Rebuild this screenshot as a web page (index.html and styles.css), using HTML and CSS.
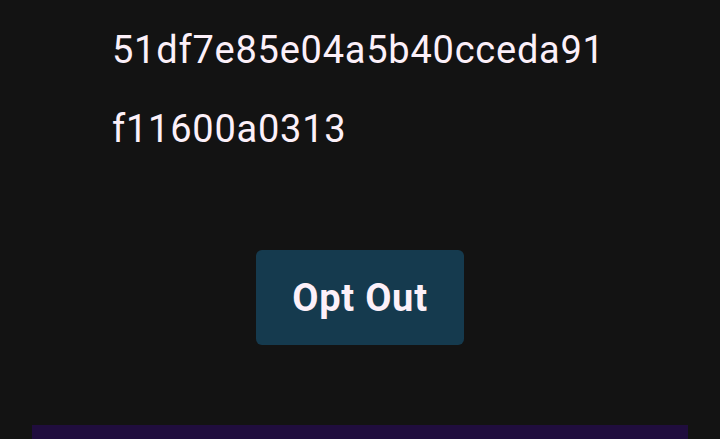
FILE: index.html
```html
<!DOCTYPE html>
<html lang="en">
<head>
  <meta charset="UTF-8">
  <meta name="viewport" content="width=device-width, initial-scale=1.0">
  <title>Opt Out</title>
  <link rel="stylesheet" href="styles.css">
</head>
<body>
<div class="page">
  <p class="device-id">51df7e85e04a5b40cceda91f11600a0313</p>
  <div class="actions">
    <button type="button" class="opt-out">Opt Out</button>
  </div>
  <div class="footer-bar"></div>
</div>
</body>
</html>
```

FILE: styles.css
```css
* {
  margin: 0;
  padding: 0;
  box-sizing: border-box;
}

body {
  font-family: 'Roboto', 'Noto Sans', sans-serif;
  background: #131313;
  color: #fcf0f9;
  overflow: hidden;
}

.page {
  padding: 11px 32px 0;
  display: flex;
  flex-direction: column;
}

.device-id {
  width: 498px;
  margin-left: 80px;
  font-size: 38px;
  line-height: 79px;
  letter-spacing: 0.02em;
  word-break: break-all;
}

.actions {
  display: flex;
  justify-content: center;
  margin-top: 81px;
}

.opt-out {
  width: 208px;
  height: 95px;
  background: #153a4e;
  color: #fcf0f9;
  border: none;
  border-radius: 6px;
  font-family: inherit;
  font-size: 38px;
  font-weight: 700;
  letter-spacing: 0.02em;
  cursor: pointer;
}

.footer-bar {
  margin-top: 80px;
  height: 15px;
  background: #200d3e;
}
```
